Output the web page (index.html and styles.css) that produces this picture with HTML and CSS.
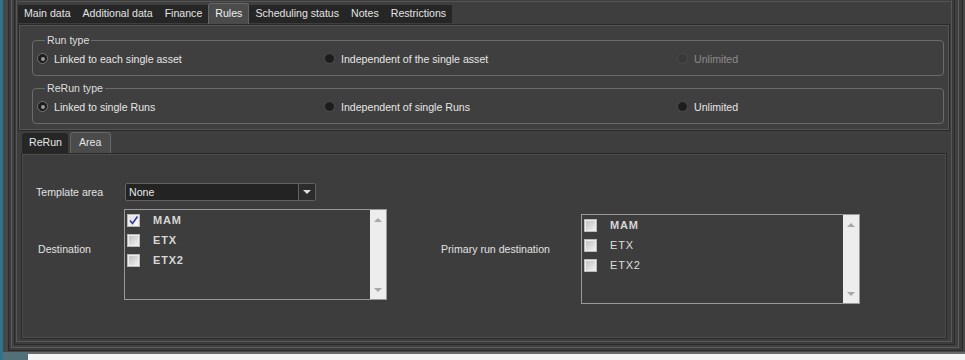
FILE: index.html
```html
<!DOCTYPE html>
<html lang="en">
<head>
    <meta charset="UTF-8">
    <title>Rules</title>
    <link rel="stylesheet" href="styles.css">
</head>
<body>
<div class="screen">
    <div class="window">
        <div class="frame f1"><div class="frame f2"><div class="frame f3"><div class="frame f4">
            <div class="content">
                <div class="tab-bar">
                    <span class="tab">Main data</span>
                    <span class="tab">Additional data</span>
                    <span class="tab">Finance</span>
                    <span class="tab active">Rules</span>
                    <span class="tab">Scheduling status</span>
                    <span class="tab">Notes</span>
                    <span class="tab">Restrictions</span>
                </div>

                <div class="rules-page">
                    <fieldset class="group">
                        <legend>Run type</legend>
                        <div class="radio-row">
                            <label class="radio-item col1"><span class="radio checked"></span>Linked to each single asset</label>
                            <label class="radio-item col2"><span class="radio"></span>Independent of the single asset</label>
                            <label class="radio-item disabled"><span class="radio"></span>Unlimited</label>
                        </div>
                    </fieldset>
                    <fieldset class="group">
                        <legend>ReRun type</legend>
                        <div class="radio-row">
                            <label class="radio-item col1"><span class="radio checked"></span>Linked to single Runs</label>
                            <label class="radio-item col2"><span class="radio"></span>Independent of single Runs</label>
                            <label class="radio-item"><span class="radio"></span>Unlimited</label>
                        </div>
                    </fieldset>
                </div>

                <div class="sub-bar">
                    <span class="subtab">ReRun</span>
                    <span class="subtab active">Area</span>
                </div>

                <div class="sub-page">
                    <div class="field-row">
                        <span class="field-label">Template area</span>
                        <div class="combo">
                            <span class="combo-value">None</span>
                            <span class="combo-btn"><span class="tri-down"></span></span>
                        </div>
                    </div>

                    <div class="dest-row">
                        <span class="field-label dest-label">Destination</span>
                        <div class="check-list list-a">
                            <div class="items">
                                <div class="item"><span class="check checked"><svg width="11" height="11" viewBox="0 0 11 11"><path d="M2 5.5 L4.5 8.5 L9.5 1.5" fill="none" stroke="#2b3a9c" stroke-width="1.6"/></svg></span><span class="item-text">MAM</span></div>
                                <div class="item"><span class="check"></span><span class="item-text">ETX</span></div>
                                <div class="item"><span class="check"></span><span class="item-text">ETX2</span></div>
                            </div>
                            <div class="scroll"><span class="tri-up small"></span><span class="tri-down small"></span></div>
                        </div>

                        <span class="field-label primary-label">Primary run destination</span>
                        <div class="check-list list-b">
                            <div class="items">
                                <div class="item"><span class="check"></span><span class="item-text">MAM</span></div>
                                <div class="item"><span class="check"></span><span class="item-text thin">ETX</span></div>
                                <div class="item"><span class="check"></span><span class="item-text thin">ETX2</span></div>
                            </div>
                            <div class="scroll"><span class="tri-up small"></span><span class="tri-down small"></span></div>
                        </div>
                    </div>
                </div>
            </div>
        </div></div></div></div>
    </div>
    <div class="bottom-strip">
        <span class="corner"></span>
        <span class="under"></span>
    </div>
</div>
</body>
</html>
```

FILE: styles.css
```css
* {
    margin: 0;
    padding: 0;
    box-sizing: border-box;
}

body {
    background: #f3f3f3;
    font-family: 'Liberation Sans', Arial, sans-serif;
    font-size: 10.6px;
    color: #e6e6e6;
    overflow: hidden;
}

.screen {
    width: 965px;
    height: 360px;
    border-left: 3px solid #2f7289;
    display: flex;
    flex-direction: column;
}

/* window frames */
.window {
    height: 352px;
    background: #474747;
    padding: 0 2px 1px 5px;
    display: flex;
}

.frame {
    flex: 1;
    display: flex;
    border: 1px solid;
    border-top: none;
}

.f1 { border-color: #2a2a2a; background: #3c3c3c; padding: 0 3px 2px 2px; }
.f2 { border-color: #5c5c5c; background: #404040; padding: 0 3px 2px 2px; }
.f3 { border-color: #2b2b2b; background: #3b3b3b; padding: 0 2px 2px 1px; }
.f4 { border-color: #575757; background: #3e3e3e; padding: 0 1px 2px 1px; }

.content {
    flex: 1;
    display: flex;
    flex-direction: column;
    background: #3e3e3e;
}

/* main tabs */
.tab-bar {
    height: 23px;
    display: flex;
    align-items: flex-end;
    border-top: 1px solid #555;
    margin-top: 1px;
}

.tab {
    height: 18px;
    line-height: 17px;
    margin-bottom: 1px;
    padding: 0 6px;
    background: #262626;
    color: #e4e4e4;
}

.tab.active {
    height: 21px;
    line-height: 18px;
    margin-bottom: 0;
    padding: 0 6px;
    background: #4b4b4b;
    border: 1px solid #666;
    border-bottom: none;
    border-radius: 3px 3px 0 0;
    color: #f0f0f0;
}

.rules-page {
    height: 107px;
    border: 1px solid #2a2a2a;
    box-shadow: inset 0 0 0 1px #555;
    background: #3f3f3f;
    padding: 9px 5px 0 13px;
}

.group {
    border: 1px solid #6b6b6b;
    border-radius: 4px;
    padding: 0 4px 4px 4px;
}

.group + .group {
    margin-top: 6px;
}

.group legend {
    line-height: 13px;
    padding: 0 2px;
    margin-left: 8px;
    color: #dedede;
}

.radio-row {
    height: 24px;
    display: flex;
    align-items: center;
    padding-bottom: 1px;
}

.radio-item {
    display: flex;
    align-items: center;
    gap: 6px;
}

.col1 { width: 287px; }
.col2 { width: 353px; }

.radio {
    width: 11px;
    height: 11px;
    border-radius: 50%;
    background: #1d1d1d;
    border: 1px solid #4e4e4e;
    display: inline-flex;
    align-items: center;
    justify-content: center;
}

.radio.checked {
    border-color: #777;
}

.radio.checked::after {
    content: "";
    width: 4px;
    height: 4px;
    border-radius: 50%;
    background: #9a9a9a;
}

.radio-item.disabled {
    color: #8c8c8c;
}

.radio-item.disabled .radio {
    background: #393939;
    border-color: #4a4a4a;
}

/* sub tabs */
.sub-bar {
    height: 22px;
    display: flex;
    align-items: flex-end;
    padding-left: 4px;
}

.subtab {
    height: 20px;
    line-height: 19px;
    padding: 0 6px 0 7px;
    background: #262626;
    margin-right: 2px;
    border-radius: 3px 3px 0 0;
}

.subtab.active {
    height: 21px;
    padding: 0 9px 0 8px;
    background: #4b4b4b;
    border: 1px solid #666;
    border-bottom: none;
}

.sub-page {
    flex: 1;
    margin: 0 3px;
    border: 1px solid #2a2a2a;
    box-shadow: inset 0 0 0 1px #4c4c4c;
    background: #3d3d3d;
    padding: 29px 0 0 14px;
}

.field-row {
    display: flex;
    align-items: center;
    height: 18px;
}

.field-label {
    color: #e2e2e2;
    line-height: 13px;
}

.field-row .field-label {
    width: 89px;
}

.combo {
    width: 191px;
    height: 18px;
    border: 1px solid #626262;
    border-radius: 2px;
    background: #232323;
    display: flex;
}

.combo-value {
    flex: 1;
    line-height: 16px;
    padding-left: 3px;
}

.combo-btn {
    width: 17px;
    border-left: 1px solid #626262;
    background: #2c2c2c;
    display: flex;
    align-items: center;
    justify-content: center;
}

.tri-down {
    width: 0;
    height: 0;
    border-left: 4px solid transparent;
    border-right: 4px solid transparent;
    border-top: 4px solid #dcdcdc;
}

.tri-up {
    width: 0;
    height: 0;
    border-left: 4px solid transparent;
    border-right: 4px solid transparent;
    border-bottom: 4px solid #a8a8a8;
}

.tri-down.small {
    border-top-color: #a8a8a8;
}

.dest-row {
    display: flex;
    align-items: flex-start;
    margin-top: 8px;
}

.dest-label {
    width: 88px;
    padding-left: 2px;
    margin-top: 34px;
}

.primary-label {
    width: 140px;
    margin-left: 54px;
    margin-top: 34px;
}

.check-list {
    display: flex;
    border: 1px solid #9a9a9a;
    background: #3d3d3d;
}

.list-a {
    width: 263px;
    height: 91px;
}

.list-b {
    width: 279px;
    height: 90px;
    margin-top: 5px;
}

.items {
    flex: 1;
    padding-left: 2px;
}

.item {
    height: 20px;
    display: flex;
    align-items: center;
}

.check {
    width: 13px;
    height: 13px;
    border: 1px solid #b8b8b8;
    background: linear-gradient(135deg, #bcbcbc, #f4f4f4);
    box-shadow: inset 0 0 0 1px #eeeeee;
    display: inline-flex;
    align-items: center;
    justify-content: center;
}

.check.checked {
    background: linear-gradient(135deg, #e0e0e0, #fafafa);
}

.item-text {
    margin-left: 13px;
    font-size: 11px;
    font-weight: bold;
    letter-spacing: 0.8px;
    color: #d6d6d6;
}

.item-text.thin {
    font-weight: normal;
    color: #dedede;
}

.scroll {
    width: 16px;
    background: #ededed;
    display: flex;
    flex-direction: column;
    align-items: center;
    justify-content: space-between;
    padding: 8px 0 7px;
}

/* bottom of the desktop */
.bottom-strip {
    flex: 1;
    display: flex;
}

.corner {
    width: 25px;
    background: #52707a;
}

.under {
    flex: 1;
    background: #f4f4f4;
    border-top: 2px solid #6a6a6a;
}
```
